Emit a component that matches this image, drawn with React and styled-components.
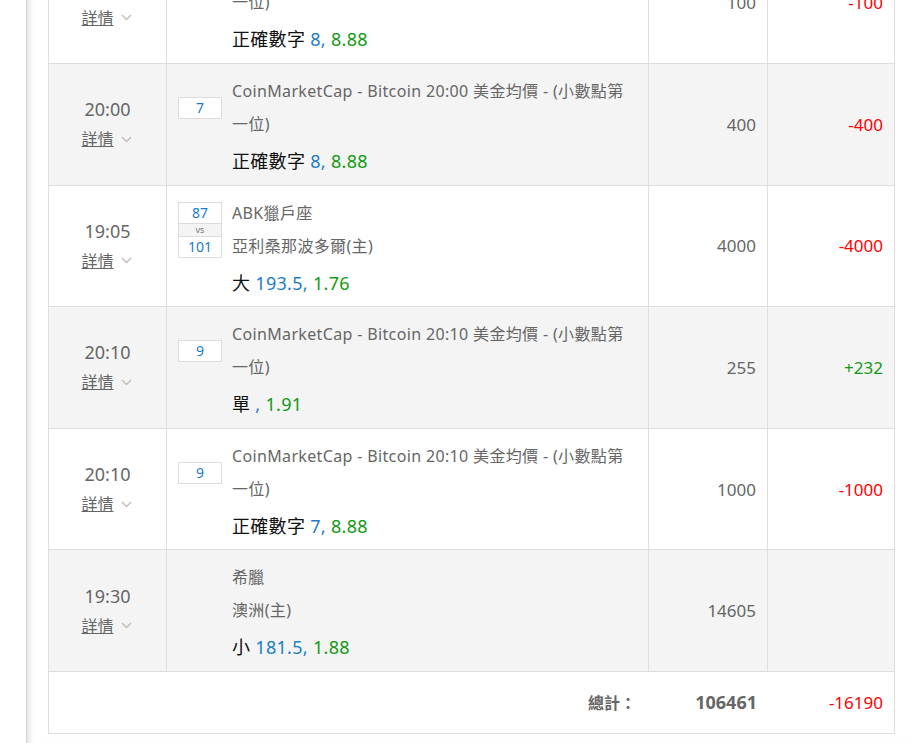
import React from "react";
import styled, { createGlobalStyle } from "styled-components";

const GlobalStyle = createGlobalStyle`
  html, body {
    margin: 0;
    padding: 0;
    background: #fff;
    overflow: hidden;
  }
  body {
    font-family: "Noto Sans", "Noto Sans CJK TC", sans-serif;
    color: #666;
  }
`;

const Page = styled.div`
  display: flex;
  height: 100vh;
`;

const Gutter = styled.div`
  width: 26px;
  flex: none;
`;

const Panel = styled.div`
  flex: 1;
  border-left: 1px solid #d4d4d4;
  box-shadow: inset 7px 0 6px -5px rgba(0, 0, 0, 0.13);
  padding: 0 18px 0 21px;
`;

const Table = styled.div`
  width: 847px;
  box-sizing: border-box;
  margin-top: -57.6px;
  border-left: 1px solid #dedede;
  border-right: 1px solid #dedede;
  border-bottom: 1px solid #dedede;
`;

const Row = styled.div`
  display: grid;
  grid-template-columns: 118px 482px 119px 1fr;
  background: ${(p) => (p.$alt ? "#f4f4f4" : "#fff")};
  border-bottom: 1px solid #dedede;
  &:last-child {
    border-bottom: none;
  }
`;

const Cell = styled.div`
  box-sizing: border-box;
  border-right: ${(p) => (p.$last || p.$plain ? "none" : "1px solid #dedede")};
  display: flex;
  align-items: center;
  justify-content: ${(p) => p.$align || "flex-start"};
  padding: 0 11px 0 11px;
`;

const TimeCell = styled(Cell)`
  flex-direction: column;
  justify-content: center;
  padding: 0;
`;

const Time = styled.div`
  font-size: 18px;
  line-height: 30px;
  color: #666;
`;

const Details = styled.div`
  display: flex;
  align-items: center;
  gap: 7px;
  margin-left: -2px;
  line-height: 30px;
`;

const DetailsLink = styled.a`
  font-size: 16px;
  color: #666;
  text-decoration: underline;
  cursor: pointer;
`;

const Chevron = () => (
  <svg width="11" height="7" viewBox="0 0 11 7">
    <polyline points="1,1 5.5,5.5 10,1" fill="none" stroke="#bdbdbd" strokeWidth="1.4" />
  </svg>
);

const EventCell = styled(Cell)`
  display: grid;
  grid-template-columns: 44px 1fr;
  grid-template-rows: auto auto;
  column-gap: 10px;
  align-items: center;
  padding: 11px 11px 5.6px 11px;
`;

const Title = styled.div`
  grid-column: 2;
  grid-row: 1;
  font-size: 16px;
  line-height: 33px;
  letter-spacing: 0.35px;
  color: #666;
`;

const Pick = styled.div`
  grid-column: 2;
  grid-row: 2;
  margin-top: 2px;
  font-size: 18px;
  line-height: 36px;
  letter-spacing: 0.3px;
  color: #111;
`;

const Blue = styled.span`
  color: #1a7ccb;
`;

const Green = styled.span`
  color: #129a12;
`;

const ScoreBox = styled.div`
  grid-column: 1;
  grid-row: 1;
  align-self: center;
  box-sizing: border-box;
  border: 1px solid #dcdcdc;
  background: #fff;
  display: flex;
  flex-direction: column;
`;

const ScoreNum = styled.div`
  height: 20px;
  line-height: 20px;
  text-align: center;
  font-size: 14px;
  color: #1a7ccb;
`;

const Vs = styled.div`
  height: 12px;
  line-height: 12px;
  text-align: center;
  font-size: 9px;
  color: #777;
  background: #f4f4f4;
  border-top: 1px solid #dcdcdc;
  border-bottom: 1px solid #dcdcdc;
`;

const Amount = styled.div`
  font-size: ${(p) => (p.$bold ? "18px" : "17px")};
  color: #666;
  font-weight: ${(p) => (p.$bold ? 700 : 400)};
`;

const Result = styled.div`
  font-size: 17px;
  color: ${(p) => (p.$value > 0 ? "#129a12" : "#ff0000")};
`;

const TotalLabel = styled.div`
  font-size: 16px;
  font-weight: 700;
  color: #666;
  margin-right: 2px;
`;

const TotalRow = styled(Row)`
  height: 61px;
`;

const bets = [
  {
    time: "19:50",
    box: ["8"],
    title: ["CoinMarketCap - Bitcoin 19:50 美金均價 - (小數點第一位)"],
    pick: ["正確數字", "8", "8.88"],
    amount: 100,
    result: -100,
  },
  {
    time: "20:00",
    box: ["7"],
    title: ["CoinMarketCap - Bitcoin 20:00 美金均價 - (小數點第一位)"],
    pick: ["正確數字", "8", "8.88"],
    amount: 400,
    result: -400,
  },
  {
    time: "19:05",
    box: ["87", "101"],
    title: ["ABK獵戶座", "亞利桑那波多爾(主)"],
    pick: ["大", "193.5", "1.76"],
    amount: 4000,
    result: -4000,
  },
  {
    time: "20:10",
    box: ["9"],
    title: ["CoinMarketCap - Bitcoin 20:10 美金均價 - (小數點第一位)"],
    pick: ["單", "", "1.91"],
    amount: 255,
    result: 232,
  },
  {
    time: "20:10",
    box: ["9"],
    title: ["CoinMarketCap - Bitcoin 20:10 美金均價 - (小數點第一位)"],
    pick: ["正確數字", "7", "8.88"],
    amount: 1000,
    result: -1000,
  },
  {
    time: "19:30",
    box: null,
    title: ["希臘", "澳洲(主)"],
    pick: ["小", "181.5", "1.88"],
    amount: 14605,
    result: null,
  },
];

const Score = ({ box }) => {
  if (!box) return null;
  if (box.length === 1)
    return (
      <ScoreBox>
        <ScoreNum>{box[0]}</ScoreNum>
      </ScoreBox>
    );
  return (
    <ScoreBox>
      <ScoreNum>{box[0]}</ScoreNum>
      <Vs>vs</Vs>
      <ScoreNum>{box[1]}</ScoreNum>
    </ScoreBox>
  );
};

const BetRow = ({ bet, alt }) => (
  <Row $alt={alt}>
    <TimeCell>
      <Time>{bet.time}</Time>
      <Details>
        <DetailsLink>詳情</DetailsLink>
        <Chevron />
      </Details>
    </TimeCell>
    <EventCell>
      <Score box={bet.box} />
      <Title>
        {bet.title.map((t, i) => (
          <div key={i}>{t}</div>
        ))}
      </Title>
      <Pick>
        {bet.pick[0]} <Blue>{bet.pick[1]},</Blue>
        <Green> {bet.pick[2]}</Green>
      </Pick>
    </EventCell>
    <Cell $align="flex-end">
      <Amount>{bet.amount}</Amount>
    </Cell>
    <Cell $align="flex-end" $last>
      {bet.result !== null && (
        <Result $value={bet.result}>
          {bet.result > 0 ? `+${bet.result}` : bet.result}
        </Result>
      )}
    </Cell>
  </Row>
);

export default function App() {
  return (
    <>
      <GlobalStyle />
      <Page>
        <Gutter />
        <Panel>
          <Table>
            {bets.map((b, i) => (
              <BetRow key={i} bet={b} alt={i % 2 === 1} />
            ))}
            <TotalRow>
              <Cell $plain />
              <Cell $plain $align="flex-end">
                <TotalLabel>總計：</TotalLabel>
              </Cell>
              <Cell $plain $align="flex-end">
                <Amount $bold>106461</Amount>
              </Cell>
              <Cell $plain $last $align="flex-end">
                <Result $value={-16190}>-16190</Result>
              </Cell>
            </TotalRow>
          </Table>
        </Panel>
      </Page>
    </>
  );
}
